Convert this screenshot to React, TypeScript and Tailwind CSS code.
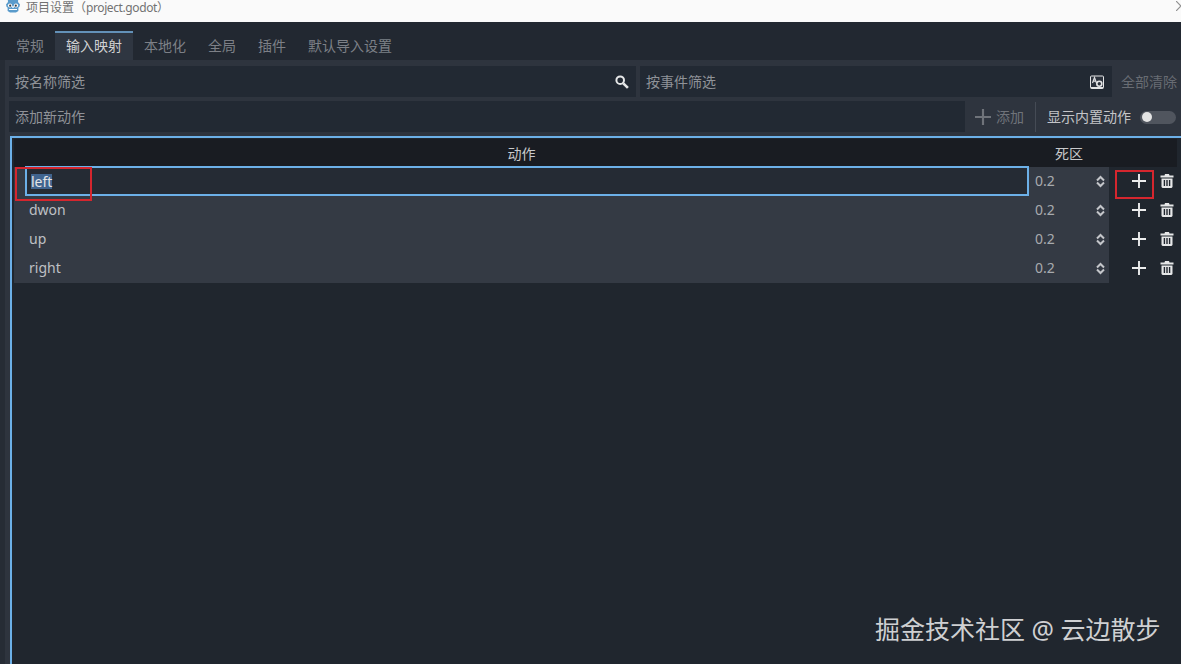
const FONT = "font-['Noto_Sans','Noto_Sans_CJK_SC',sans-serif]"

const TABS = ['常规', '输入映射', '本地化', '全局', '插件', '默认导入设置']
const ROWS = ['left', 'dwon', 'up', 'right']

function GodotIcon() {
  return (
    <svg viewBox="0 0 16 14" className="-mt-px h-[14px] w-[16px] shrink-0">
      <path
        d="M1 5.500 3 3 2.800.5 5 0h6l2.200.5L13 3l2 2.500-.6 2.500-1 .5V12l-2.400 1.500H5L2.600 12V8.500l-1-.5z"
        fill="#5a9bcb"
      />
      <circle cx="5" cy="6.500" r="2.100" fill="#fff" />
      <circle cx="11" cy="6.500" r="2.100" fill="#fff" />
      <circle cx="5.200" cy="6.700" r="1.100" fill="#414042" />
      <circle cx="10.800" cy="6.700" r="1.100" fill="#414042" />
      <rect x="7.300" y="7" width="1.400" height="2" fill="#fff" />
      <path d="M4 10.500h8" stroke="#fff" strokeWidth="1" />
    </svg>
  )
}

function SearchIcon() {
  return (
    <svg viewBox="0 0 14 14" className="size-[14px]" fill="none" stroke="#e6e7e8">
      <circle cx="5.200" cy="5.200" r="3.800" strokeWidth="2" />
      <path d="m8.300 8.300 4.600 4.600" strokeWidth="2.600" />
    </svg>
  )
}

function EventIcon() {
  return (
    <svg viewBox="0 0 14 14" className="size-[14px]">
      <rect x="0.500" y="1" width="13" height="12.500" rx="1" fill="#2c323c" stroke="#e4e5e6" />
      <rect x="1" y="12" width="12" height="1.500" fill="#e4e5e6" />
      <path d="M2.500 8 4.500 2.500 6.500 8M3.300 6.200h2.400" fill="none" stroke="#dcdde0" strokeWidth="1.200" />
      <circle cx="9.300" cy="8.800" r="2.500" fill="none" stroke="#e4e5e6" strokeWidth="1.600" />
    </svg>
  )
}

function TrashIcon() {
  return (
    <svg viewBox="0 0 14 14" className="size-[14px]" fill="#e6e7e8">
      <path d="M5 0h4l.5 1.500H13.500v2H.5v-2H4.500z" />
      <path d="M1.500 4.500h11V13l-1 1h-9l-1-1zM3.700 6v6h1.400V6zm2.600 0v6h1.400V6zm2.600 0v6h1.400V6z" fillRule="evenodd" />
    </svg>
  )
}

function PlusIcon({ className }: { className: string }) {
  return (
    <svg viewBox="0 0 14 14" className={className} fill="none" stroke="currentColor" strokeWidth="1.900">
      <path d="M7 0v14M0 7h14" />
    </svg>
  )
}

function Spinner() {
  return (
    <svg viewBox="0 0 9 13" className="h-[13px] w-[9px] text-[#c4c6ca]" fill="none" stroke="currentColor" strokeWidth="2">
      <path d="M1 5.500 4.500 2 8 5.500M1 7.500 4.500 11 8 7.500" />
    </svg>
  )
}

function ActionRow({ name, editing }: { name: string; editing: boolean }) {
  return (
    <div className="flex h-[29px]">
      <div className="flex w-[1095px] bg-[#343a44]">
        <div className="w-[1015px] pl-[11px]">
          {editing ? (
            <div className="flex h-[30px] w-[1004px] -translate-y-px items-center border-2 border-[#6cb0e8] bg-[#252b34] pl-[4px]">
              <span className="bg-[#41658f] text-[14px] leading-[15px] text-[#e4e4e4]">{name}</span>
            </div>
          ) : (
            <div className="flex h-full items-center pb-[2px] pl-[4px] text-[14px] text-[#bfc0c4]">{name}</div>
          )}
        </div>
        <div className="flex flex-1 items-center justify-between pr-[4px] pl-[6px] text-[14px] text-[#a8aaae]">
          <span className="pb-[2px]">0.2</span>
          <Spinner />
        </div>
      </div>
      <div className="flex flex-1 items-center pb-[2px] pl-[23px]">
        <PlusIcon className="size-[14px] text-[#eceded]" />
        <div className="ml-[14px]">
          <TrashIcon />
        </div>
      </div>
    </div>
  )
}

export default function App() {
  return (
    <div className={`relative flex h-[664px] w-[1181px] flex-col overflow-hidden bg-[#262c35] ${FONT}`}>
      <div className="flex h-[22px] shrink-0 items-start gap-[5px] bg-[#fafafa] pl-[5px] text-[12px] leading-[14px] text-[#727272]">
        <GodotIcon />
        <span className="pt-px">
          项目设置（<span className="tracking-[-0.4px]">project.godot</span>）
        </span>
        <svg viewBox="0 0 5 10" className="mt-px ml-auto h-[10px] w-[5px]" fill="none" stroke="#909090" strokeWidth="1.200">
          <path d="M0 0 5 5 0 10" />
        </svg>
      </div>

      <div className="flex h-[38px] shrink-0 items-end bg-[#222831] pl-[5px] text-[14px] text-[#7d8087]">
        {TABS.map((tab) =>
          tab === '输入映射' ? (
            <div
              key={tab}
              className="flex h-[29px] items-center border-t-2 border-[#6391b8] bg-[#2f3641] px-[11px] pb-[2px] text-[#cfd0d2]"
            >
              {tab}
            </div>
          ) : (
            <div key={tab} className="flex h-[29px] items-center px-[11px]">
              {tab}
            </div>
          ),
        )}
      </div>

      <div className="ml-[5px] flex flex-1 flex-col bg-[#2e343e] pt-[6px] pl-[4px]">
        <div className="flex h-[31px] shrink-0 items-center gap-[4px] text-[14px] text-[#8f9298]">
          <div className="flex h-full w-[627px] items-center justify-between bg-[#222933] pr-[7px] pl-[6px]">
            <span>按名称筛选</span>
            <SearchIcon />
          </div>
          <div className="flex h-full w-[472px] items-center justify-between bg-[#222933] pr-[8px] pl-[6px]">
            <span>按事件筛选</span>
            <EventIcon />
          </div>
          <span className="ml-[5px] text-[#686c73]">全部清除</span>
        </div>

        <div className="mt-[4px] flex h-[31px] shrink-0 items-center text-[14px]">
          <div className="flex h-full w-[956px] items-center bg-[#222933] pl-[6px] text-[#8f9298]">添加新动作</div>
          <PlusIcon className="ml-[10px] size-[16px] text-[#6f737a]" />
          <span className="ml-[5px] text-[#6f737a]">添加</span>
          <div className="mx-[11px] h-[30px] w-px bg-[#454b55]" />
          <span className="text-[#c4c5c8]">显示内置动作</span>
          <div className="relative mt-px ml-[9px] h-[13px] w-[36px] rounded-full bg-[#50555e]">
            <div className="absolute top-[1.500px] left-[2px] size-[10px] rounded-full bg-[#e4e4e4]" />
          </div>
        </div>

        <div className="mt-[4px] ml-px flex-1 border-t-2 border-l-2 border-[#6cb0e8] bg-[#20262e] pt-px pl-[2px]">
          <div className="flex h-[28px] w-[1163px] bg-[#191c22] text-[14px] text-[#c8c9cb]">
            <div className="flex w-[1015px] items-center justify-center">动作</div>
            <div className="flex w-[80px] items-center justify-center">死区</div>
          </div>
          {ROWS.map((row, i) => (
            <ActionRow key={row} name={row} editing={i === 0} />
          ))}
        </div>
      </div>

      {/* annotations burned into the screenshot */}
      <div className="absolute top-[167px] left-[15px] h-[34px] w-[77px] border-2 border-[#d5262e]" />
      <div className="absolute top-[170px] left-[1115px] h-[29px] w-[39px] border-2 border-[#d5262e]" />
      <div className="absolute top-[612px] left-[875px] text-[25px] leading-[34px] text-[#cfd0d2]">
        掘金技术社区 @ 云边散步
      </div>
    </div>
  )
}
